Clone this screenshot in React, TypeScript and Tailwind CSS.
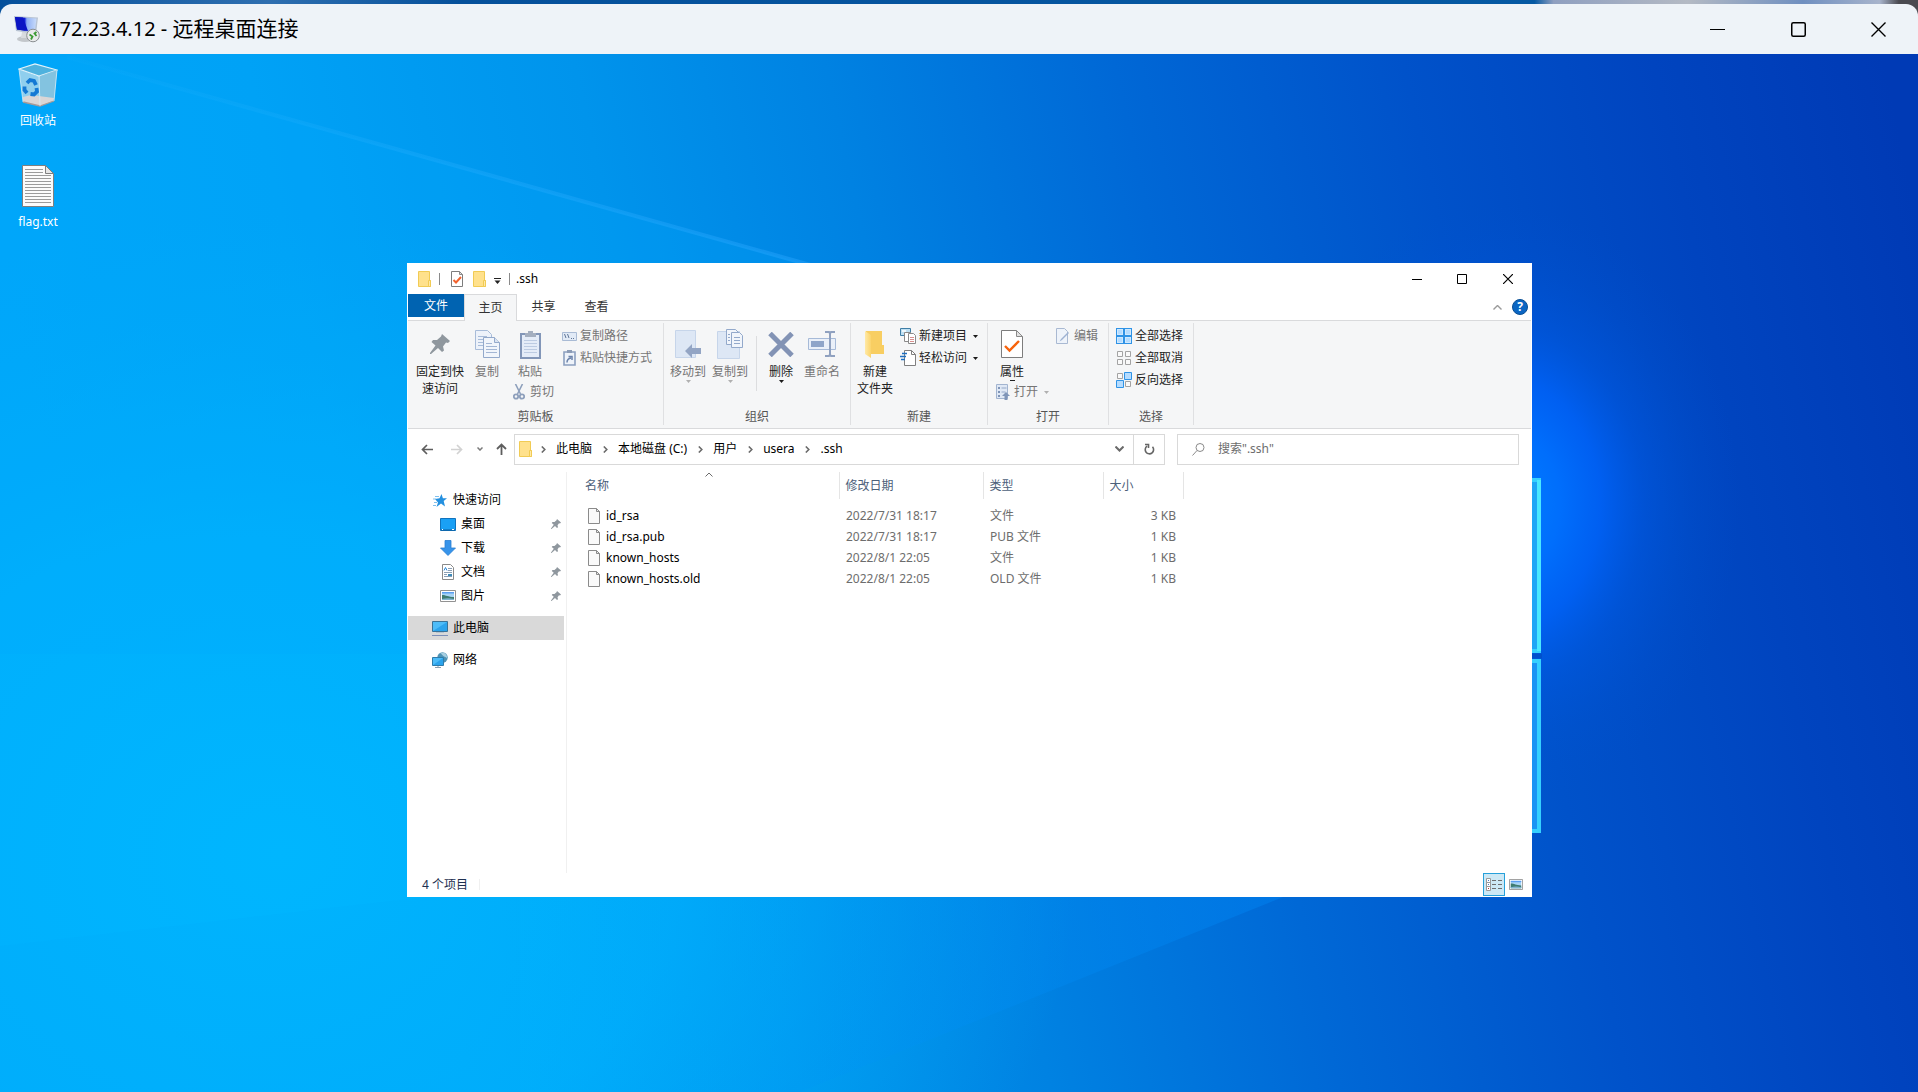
import { useState } from 'react';
import type { ReactNode } from 'react';

interface FileEntry {
  name: string;
  modified: string;
  type: string;
  size: string;
}

const FILES: FileEntry[] = [
  { name: 'id_rsa', modified: '2022/7/31 18:17', type: '文件', size: '3 KB' },
  { name: 'id_rsa.pub', modified: '2022/7/31 18:17', type: 'PUB 文件', size: '1 KB' },
  { name: 'known_hosts', modified: '2022/8/1 22:05', type: '文件', size: '1 KB' },
  { name: 'known_hosts.old', modified: '2022/8/1 22:05', type: 'OLD 文件', size: '1 KB' },
];

const CRUMBS = ['此电脑', '本地磁盘 (C:)', '用户', 'usera', '.ssh'];

const TABS = ['主页', '共享', '查看'];

// ---------- Icons ----------

function RemoteDesktopIcon() {
  return (
    <svg className="h-[28px] w-[28px]" viewBox="0 0 28 28">
      <defs>
        <linearGradient id="rdScreen" x1="0" y1="0" x2="1" y2="0">
          <stop offset="0" stopColor="#0a12a8" />
          <stop offset="0.45" stopColor="#1420d8" />
          <stop offset="0.55" stopColor="#8fb0f4" />
          <stop offset="1" stopColor="#c9dcfb" />
        </linearGradient>
      </defs>
      <ellipse cx="12" cy="24" rx="8" ry="3" fill="#c3c7cb" />
      <path d="M9 17h7l1 6H8z" fill="#d8dbde" />
      <path d="M1 1l24 1.500-2 16.500-20-3z" fill="#b8c4d4" />
      <path d="M2 2l21.500 1.500-1.800 13.700L4 14.500z" fill="url(#rdScreen)" />
      <path d="M2 2l8 .6 5 13.500-11-1.600z" fill="#0b14c4" />
      <circle cx="20" cy="20.500" r="6.300" fill="#e9ebec" stroke="#8b8f92" />
      <path d="M16.500 19.500l3 2-1.500 3M23.500 17l-2 1.500 2 2.500" fill="none" stroke="#3c9a34" strokeWidth="1.800" />
    </svg>
  );
}

function RecycleBinIcon() {
  return (
    <svg className="h-[44px] w-[40px]" viewBox="0 0 40 44">
      <path d="M1 6l4 33 17 4 14-5 3-31-20 6z" fill="#9fd4ec" fillOpacity="0.9" />
      <path d="M1 6l16-5 22 6-18 6z" fill="#4fb2de" stroke="#e3f3fa" strokeWidth="1.200" />
      <path d="M22 13l17-6-3 31-14 5z" fill="#7fbfdc" fillOpacity="0.8" />
      <path d="M5 34l8-2 23 3-1 3-13 5-17-4z" fill="#d9d6d6" />
      <path d="M5 39l17 4 14-5" fill="none" stroke="#a89a98" strokeWidth="1.300" />
      <path d="M1 6l4 33M39 7l-3 31M21 13l1 30" stroke="#d5ecf6" strokeWidth="0.800" fill="none" />
      <path
        d="M9 20l3-3 4 1 2 4M6.500 23.500L6.500 27l2.500 3M18.500 25l.5 3.500-3 3-3.500-.5"
        fill="none"
        stroke="#1479d4"
        strokeWidth="3.800"
      />
    </svg>
  );
}

function TextFileIcon() {
  return (
    <svg className="h-[42px] w-[32px]" viewBox="0 0 32 42">
      <path d="M.5.500h23l8 8v33H.5z" fill="#fbfbfb" stroke="#7f7f7f" />
      <path d="M23.500.500v8h8z" fill="#e6e6e6" stroke="#7f7f7f" />
      <path
        d="M3 4.500h18M3 7.500h18M3 10.500h26M3 13.500h26M3 16.500h26M3 19.500h26M3 22.500h26M3 25.500h26M3 28.500h26M3 31.500h26M3 34.500h26M3 37.500h26"
        stroke="#9b9b9b"
      />
    </svg>
  );
}

function FolderIcon() {
  return (
    <svg className="h-[17px] w-[14px]" viewBox="0 0 14 17">
      <path d="M.5.500h11v9h1v6H.5z" fill="#ffe18c" stroke="#f1cb54" />
      <path d="M10.500 9.500h2v6h-2z" fill="#ffe9a8" stroke="#f1cb54" />
    </svg>
  );
}

function CheckPageIcon({ large = false }: { large?: boolean }) {
  return (
    <svg className={large ? 'h-[28px] w-[22px]' : 'h-[16px] w-[12px]'} viewBox={large ? '0 0 22 28' : '0 0 12 16'}>
      {large ? (
        <>
          <path d="M.5.500h15l6 6v21H.5z" fill="#fff" stroke="#7d7d7d" />
          <path d="M15.500.500v6h6z" fill="#e2e2e2" stroke="#8a8a8a" />
          <path d="M4 16l4.500 4.500L18 11" fill="none" stroke="#f7630c" strokeWidth="2.400" />
        </>
      ) : (
        <>
          <path d="M.5.500h8l3 3v12H.5z" fill="#fff" stroke="#7d7d7d" />
          <path d="M8.500.500v3h3z" fill="#e2e2e2" stroke="#8a8a8a" />
          <path d="M2.500 9l2.500 2.500L10 6" fill="none" stroke="#f2622e" strokeWidth="2" />
        </>
      )}
    </svg>
  );
}

function PinIcon({ small = false }: { small?: boolean }) {
  return (
    <svg className={small ? 'h-[10px] w-[10px]' : 'h-[20px] w-[20px]'} viewBox="0 0 20 20" fill="#8f979e">
      <path d="M12 0l8 7-2 2-2-.5-3 4 1 4-2 1.500-4-4L1 20H0v-1l5.500-7.500-4-3.500L3 6h4l4-3.500z" />
    </svg>
  );
}

function CopyIcon() {
  return (
    <svg className="h-[28px] w-[25px]" viewBox="0 0 25 28">
      <path d="M.5.500h12l4 4v15H.5z" fill="#edf2fa" stroke="#a8bcd9" />
      <path d="M3 6.500h9M3 9.500h9M3 12.500h6M3 15.500h6" stroke="#a8bcd9" />
      <path d="M8.500 7.500h11l5 5v15h-16z" fill="#f1f5fb" stroke="#93a9cb" />
      <path d="M19.500 7.500v5h5" fill="#dbe4f1" stroke="#93a9cb" />
      <path d="M11 13.500h6M11 16.500h11M11 19.500h11M11 22.500h11" stroke="#a3b6d4" />
    </svg>
  );
}

function PasteIcon() {
  return (
    <svg className="h-[29px] w-[21px]" viewBox="0 0 21 29">
      <path d="M1 4h19v24H1z" fill="#e4ecf8" stroke="#8296b8" strokeWidth="2" />
      <path d="M5 3h3V1h5v2h3v4H5z" fill="#a4afc0" />
      <path d="M4 10.500h13M4 13.500h13M4 16.500h13M4 19.500h13M4 22.500h13" stroke="#bccbe2" />
    </svg>
  );
}

function CutIcon() {
  return (
    <svg className="h-[16px] w-[12px]" viewBox="0 0 12 16" fill="none" stroke="#8ea0bc">
      <path d="M2.500 0l5 10M9.500 0l-5 10" strokeWidth="1.600" />
      <circle cx="3" cy="12.500" r="2.200" strokeWidth="1.800" />
      <circle cx="9" cy="12.500" r="2.200" strokeWidth="1.800" />
    </svg>
  );
}

function CopyPathIcon() {
  return (
    <svg className="h-[9px] w-[15px]" viewBox="0 0 15 9">
      <path d="M.5.500h14v8H.5z" fill="#e1eaf6" stroke="#a9bbd5" />
      <path d="M2.500 2l1.500 4M5.500 2L7 6M9 6.500h1M11 6.500h1" stroke="#5f7596" />
    </svg>
  );
}

function PasteShortcutIcon() {
  return (
    <svg className="h-[16px] w-[13px]" viewBox="0 0 13 16">
      <path d="M1 2h11v13H1z" fill="#eef3fa" stroke="#8ca0c0" strokeWidth="1.600" />
      <path d="M4 0h5v3H4z" fill="#8c9cb6" />
      <path d="M4 12.500c0-3 1-4 4-4.500M5.500 6.500H9V10" fill="none" stroke="#6b83ab" strokeWidth="1.500" />
    </svg>
  );
}

function MoveToIcon() {
  return (
    <svg className="h-[28px] w-[26px]" viewBox="0 0 26 28">
      <path d="M.5.500h20v27H.5z" fill="#dde7f5" stroke="#c6d5ea" />
      <path d="M17 14v4h9v6h-9v4l-7-7z" fill="#93a5c4" />
    </svg>
  );
}

function CopyToIcon() {
  return (
    <svg className="h-[30px] w-[26px]" viewBox="0 0 26 30">
      <path d="M.5 2.500h22v27H.5z" fill="#dde7f5" stroke="#c6d5ea" />
      <path d="M9.500.500h9l3 3v12h-12z" fill="#f1f5fb" stroke="#93a9cb" />
      <path d="M14.500 3.500h8l3 3v12h-11z" fill="#f1f5fb" stroke="#93a9cb" />
      <path d="M17 8.500h6M17 11.500h6M17 14.500h6M11 5.500h2M11 8.500h2M11 11.500h2" stroke="#93a9cb" />
    </svg>
  );
}

function DeleteIcon() {
  return (
    <svg className="h-[25px] w-[26px]" viewBox="0 0 26 25">
      <path d="M2 1.500l22 22M24 1.500l-22 22" stroke="#8293b5" strokeWidth="5" />
    </svg>
  );
}

function RenameIcon() {
  return (
    <svg className="h-[26px] w-[28px]" viewBox="0 0 28 26">
      <path d="M.5 7.500h27v11H.5z" fill="#eaf0f9" stroke="#a6bad8" />
      <path d="M3 10h13v6H3z" fill="#8fa5c9" />
      <path d="M17 1h4l1 1.500L23 1h4M17 25h4l1-1.500 1 1.500h4M22 2v22" stroke="#8fa1c0" strokeWidth="2" fill="none" />
    </svg>
  );
}

function NewFolderIcon() {
  return (
    <svg className="h-[27px] w-[20px]" viewBox="0 0 20 27">
      <defs>
        <linearGradient id="folderFront" x1="0" y1="0" x2="1" y2="0">
          <stop offset="0" stopColor="#ffe9a6" />
          <stop offset="1" stopColor="#fbd46c" />
        </linearGradient>
      </defs>
      <path d="M1 0h16v14h2v9H1z" fill="#f8ce62" />
      <path d="M0 0l6 4v23l-6-4z" fill="url(#folderFront)" />
    </svg>
  );
}

function NewItemIcon() {
  return (
    <svg className="h-[16px] w-[16px]" viewBox="0 0 16 16">
      <path d="M.5.500h10v7H.5z" fill="#bfe0f3" stroke="#3f7ea6" />
      <path d="M2 2h4v2H2z" fill="#eef8fd" />
      <path d="M4.500 4.500h6v9h-6z" fill="#fff" stroke="#8a8a8a" />
      <path d="M8.500 5.500h5l2 2v8h-7z" fill="#fff" stroke="#8a8a8a" />
      <path d="M10 9.500h4M10 11.500h4M10 13.500h4" stroke="#d88f8f" />
    </svg>
  );
}

function EasyAccessIcon() {
  return (
    <svg className="h-[16px] w-[16px]" viewBox="0 0 16 16">
      <path d="M4.500.500h7l4 4v11h-11z" fill="#fff" stroke="#7f7f7f" />
      <path d="M11.500.500v4h4" fill="none" stroke="#7f7f7f" />
      <path d="M2 3.500h5M0 6.500h6M1 9.500h4" stroke="#1f6fc0" strokeWidth="1.300" />
    </svg>
  );
}

function EditIcon() {
  return (
    <svg className="h-[16px] w-[14px]" viewBox="0 0 14 16">
      <path d="M.5.500h8l3 3v12H.5z" fill="#eef3fa" stroke="#a9b9d2" />
      <path d="M13 5l-7 7-2.500 1.500L5 11l7-7z" fill="#9db2d2" />
    </svg>
  );
}

function OpenIcon() {
  return (
    <svg className="h-[16px] w-[14px]" viewBox="0 0 14 16">
      <path d="M.5.500h11v14H.5z" fill="#dfe8f5" stroke="#a2b4d0" />
      <path d="M2 3h2v2H2zM2 7h2v2H2zM2 11h2v2H2z" fill="#7f95b8" />
      <path d="M5.500 4h5M5.500 8h4" stroke="#94a8c8" />
      <path d="M10 8l4 4h-2.500v4h-3v-4H6z" fill="#7f95b8" />
    </svg>
  );
}

function SelectAllIcon() {
  return (
    <svg className="h-[16px] w-[16px]" viewBox="0 0 16 16">
      <path d="M0 0h16v16H0z" fill="#2f93e6" />
      <path d="M1 1h6v6H1zM9 1h6v6H9zM1 9h6v6H1zM9 9h6v6H9z" fill="#cfe9ff" />
      <path d="M2 2h4v4H2zM10 2h4v4h-4zM2 10h4v4H2zM10 10h4v4h-4z" fill="#b5dcff" />
    </svg>
  );
}

function SelectNoneIcon() {
  return (
    <svg className="h-[16px] w-[16px]" viewBox="0 0 16 16">
      <path d="M1.500 1.500h5v5h-5zM9.500 1.500h5v5h-5zM1.500 9.500h5v5h-5zM9.500 9.500h5v5h-5z" fill="#fafafa" stroke="#a3a3a3" />
    </svg>
  );
}

function InvertIcon() {
  return (
    <svg className="h-[16px] w-[16px]" viewBox="0 0 16 16">
      <path d="M1.500 1.500h5v5h-5zM9.500 9.500h5v5h-5z" fill="#fafafa" stroke="#a3a3a3" />
      <path d="M8.500.500h7v7h-7zM.5 8.500h7v7h-7z" fill="#b5dcff" stroke="#2f93e6" />
    </svg>
  );
}

function Caret({ muted = false }: { muted?: boolean }) {
  return (
    <svg className="h-[3px] w-[5px]" viewBox="0 0 5 3">
      <path d="M0 0h5L2.500 3z" fill={muted ? '#b0b0b0' : '#1a1a1a'} />
    </svg>
  );
}

function CrumbChevron() {
  return (
    <svg className="h-[7px] w-[5px] shrink-0" viewBox="0 0 5 7" fill="none" stroke="#6b6b6b" strokeWidth="1.600">
      <path d="M.8.500l3 3-3 3" />
    </svg>
  );
}

function StarIcon() {
  return (
    <svg className="h-[13px] w-[14px]" viewBox="0 0 14 13">
      <path d="M8.500 0l1.400 4.200H14l-3.300 2.700L12 12.500 8 9.500l-4.500 3.500L5 8.500 2 5l4.500-.8z" fill="#2490df" />
      <path d="M2 2.500h4M0 5h3M1 8.500h3M0 11.500h3" stroke="#7fc0ee" />
    </svg>
  );
}

function DesktopIcon() {
  return (
    <svg className="h-[13px] w-[16px]" viewBox="0 0 16 13">
      <path d="M.5.500h15v12H.5z" fill="#1aa0f5" stroke="#1173bd" />
      <path d="M1 12h14" stroke="#0d5f9e" />
      <path d="M2 11.500h1M12 11.500h2" stroke="#fff" />
    </svg>
  );
}

function DownloadIcon() {
  return (
    <svg className="h-[16px] w-[16px]" viewBox="0 0 16 16">
      <path d="M5 .5h6V8h4.500L8 15.500.5 8H5z" fill="#3794ea" stroke="#2a7fd2" strokeWidth="0.800" />
    </svg>
  );
}

function DocumentIcon() {
  return (
    <svg className="h-[16px] w-[16px]" viewBox="0 0 16 16">
      <path d="M2.500.500h8l3 3v12h-11z" fill="#fff" stroke="#8a8a8a" />
      <path d="M8 4.500h4M8 6.500h4M4 8.500h8M4 10.500h3M4 12.500h8" stroke="#8a9fb5" />
      <path d="M4 6.500l1.500-3 1.500 3" stroke="#2b88d8" fill="none" />
      <path d="M8 10h4v2H8z" fill="#3d8ab8" />
    </svg>
  );
}

function PictureIcon({ small = false }: { small?: boolean }) {
  return (
    <svg className={small ? 'h-[11px] w-[14px]' : 'h-[12px] w-[16px]'} viewBox="0 0 16 12" preserveAspectRatio="none">
      <path d="M.5.500h15v11H.5z" fill="#fff" stroke="#929292" />
      <path d="M2 2h12v8H2z" fill="#a8d4f5" />
      <path d="M2 5c4 0 6 2 12 2v3H2z" fill="#3e7c72" />
      <path d="M2 9c4-1 8-1 12 0v1H2z" fill="#7fb3d0" />
      <path d="M2 2h12v1.500H2z" fill="#5a9ff2" />
    </svg>
  );
}

function ThisPcIcon() {
  return (
    <svg className="h-[16px] w-[16px]" viewBox="0 0 16 16">
      <path d="M.5 1.500h15v10H.5z" fill="#4dbcf8" stroke="#3a7296" />
      <path d="M1 11L15 2v9z" fill="#2ba3ec" />
      <path d="M4 12.500h8" stroke="#b5c3cf" />
      <path d="M0 15.500h16" stroke="#7c8fb8" />
    </svg>
  );
}

function NetworkIcon() {
  return (
    <svg className="h-[16px] w-[16px]" viewBox="0 0 16 16">
      <circle cx="10.500" cy="5.500" r="5.200" fill="#4f93b4" />
      <path d="M8 1.500c2 0 2 2 4 3s3 1 3 2c.5-3-1-5-3.500-6z" fill="#a7cfe2" />
      <path d="M.5 5.500h11v8H.5z" fill="#4dbcf8" stroke="#2e7cab" />
      <path d="M1 13l10-7v7z" fill="#2ba3ec" />
      <path d="M6 14v1M3 15.500h6" stroke="#8ba0b0" />
    </svg>
  );
}

function BlankFileIcon() {
  return (
    <svg className="h-[16px] w-[12px]" viewBox="0 0 12 16">
      <path d="M.5.500h8l3 3v12H.5z" fill="#fafafa" stroke="#8b8b8b" />
      <path d="M8.500.500v3h3z" fill="#e9e9e9" stroke="#8b8b8b" />
    </svg>
  );
}

// ---------- Desktop ----------

function Wallpaper() {
  return (
    <svg className="absolute inset-0 h-full w-full" viewBox="0 0 1918 1038" preserveAspectRatio="none">
      <defs>
        <linearGradient id="sky" gradientUnits="userSpaceOnUse" x1="0" y1="200" x2="1838" y2="-204">
          <stop offset="0" stopColor="#00a6f9" />
          <stop offset="0.15" stopColor="#00a2f6" />
          <stop offset="0.32" stopColor="#0094ec" />
          <stop offset="0.45" stopColor="#0082e2" />
          <stop offset="0.6" stopColor="#0068d6" />
          <stop offset="0.75" stopColor="#0052ca" />
          <stop offset="0.88" stopColor="#0044bf" />
          <stop offset="1" stopColor="#003ab5" />
        </linearGradient>
        <radialGradient
          id="cyan"
          gradientUnits="userSpaceOnUse"
          cx="0"
          cy="0"
          r="1"
          gradientTransform="translate(280 800) scale(800 640)"
        >
          <stop offset="0" stopColor="#00b8ff" stopOpacity="0.9" />
          <stop offset="0.5" stopColor="#00b4fe" stopOpacity="0.7" />
          <stop offset="1" stopColor="#00acf6" stopOpacity="0" />
        </radialGradient>
        <radialGradient
          id="glow"
          gradientUnits="userSpaceOnUse"
          cx="0"
          cy="0"
          r="1"
          gradientTransform="translate(1500 450) scale(240 300)"
        >
          <stop offset="0" stopColor="#0080ff" />
          <stop offset="0.25" stopColor="#0070ff" stopOpacity="0.95" />
          <stop offset="0.42" stopColor="#0064fc" stopOpacity="0.8" />
          <stop offset="0.6" stopColor="#005cea" stopOpacity="0.45" />
          <stop offset="0.8" stopColor="#0056da" stopOpacity="0.2" />
          <stop offset="1" stopColor="#0050d0" stopOpacity="0" />
        </radialGradient>
        <linearGradient id="beam" gradientUnits="userSpaceOnUse" x1="67" y1="0" x2="1000" y2="300">
          <stop offset="0" stopColor="#2bb8ff" stopOpacity="0.05" />
          <stop offset="0.4" stopColor="#2bb0ff" stopOpacity="0.3" />
          <stop offset="1" stopColor="#2ba0ff" stopOpacity="0.5" />
        </linearGradient>
        <linearGradient id="lowerRay" gradientUnits="userSpaceOnUse" x1="500" y1="0" x2="1310" y2="0">
          <stop offset="0" stopColor="#0098f8" stopOpacity="0" />
          <stop offset="1" stopColor="#0088f8" stopOpacity="0.4" />
        </linearGradient>
      </defs>
      <rect width="1918" height="1038" fill="url(#sky)" />
      <rect width="1918" height="1038" fill="url(#cyan)" />
      <path d="M67 3l1033 289v308H0V0z" fill="#00a8ff" fillOpacity="0.2" />
      <path d="M67 3l1033 289" stroke="url(#beam)" strokeWidth="4" />
      <path d="M500 820h840L800 1038H500z" fill="url(#lowerRay)" />
      <path d="M0 892l520-60v206H0z" fill="#00a8f4" fillOpacity="0.12" />
      <rect width="1918" height="1038" fill="url(#glow)" />
      <g stroke="#35d0ff" strokeWidth="4">
        <path d="M1300 426h239v171h-239z" fill="#1fa6f6" />
        <path d="M1300 607h239v170h-239z" fill="#1a94f4" />
      </g>
      <path d="M1520 602h22" stroke="#0050cc" strokeWidth="5" />
      <path d="M1539 426v171" stroke="#4ae8ff" strokeWidth="4" />
    </svg>
  );
}

function DesktopShortcut({ icon, label }: { icon: ReactNode; label: string }) {
  return (
    <button className="flex h-[101px] w-[76px] flex-col items-center pt-[7px]">
      <span className="flex h-[48px] items-center justify-center">{icon}</span>
      <span className="mt-1 text-xs leading-4 text-white">{label}</span>
    </button>
  );
}

// ---------- Ribbon ----------

interface RibbonProps {
  icon: ReactNode;
  label: ReactNode;
  muted?: boolean;
  caret?: boolean;
  className?: string;
}

function BigButton({ icon, label, muted = false, caret = false, className = '' }: RibbonProps) {
  return (
    <button
      className={`flex flex-col items-center text-xs leading-[17px] ${muted ? 'text-[#757575]' : 'text-[#222]'} ${className}`}
    >
      <span className="flex h-[38px] items-center">{icon}</span>
      <span className="whitespace-nowrap">{label}</span>
      {caret && <Caret muted={muted} />}
    </button>
  );
}

function SmallButton({ icon, label, muted = false, caret = false, className = '' }: RibbonProps) {
  return (
    <button
      className={`flex h-[22px] items-center gap-[3px] text-xs whitespace-nowrap ${muted ? 'text-[#757575]' : 'text-[#222]'} ${className}`}
    >
      <span className="flex w-4 justify-center">{icon}</span>
      {label}
      {caret && (
        <span className="ml-[3px]">
          <Caret muted={muted} />
        </span>
      )}
    </button>
  );
}

interface RibbonGroupProps {
  title: string;
  className: string;
  children: ReactNode;
}

function RibbonGroup({ title, className, children }: RibbonGroupProps) {
  return (
    <section className={`flex shrink-0 flex-col border-r border-[#dfe0e2] ${className}`}>
      <div className="flex h-[86px] pt-[2px]">{children}</div>
      <h3 className="text-center text-xs leading-4 text-[#555]">{title}</h3>
    </section>
  );
}

function Ribbon() {
  return (
    <div className="flex h-[108px] overflow-hidden border-b border-[#d9dadc] bg-[#f5f6f7] pt-[2px] pb-[3px]">
      <RibbonGroup title="剪贴板" className="w-[256px]">
        <BigButton icon={<PinIcon />} label={<>固定到快<br />速访问</>} className="ml-1 w-[56px]" />
        <BigButton icon={<CopyIcon />} label="复制" muted className="w-[38px]" />
        <div className="flex w-[55px] flex-col gap-px pl-[5px]">
          <BigButton icon={<PasteIcon />} label="粘贴" muted className="w-[38px]" />
          <SmallButton icon={<CutIcon />} label="剪切" muted />
        </div>
        <div className="flex flex-col">
          <SmallButton icon={<CopyPathIcon />} label="复制路径" muted />
          <SmallButton icon={<PasteShortcutIcon />} label="粘贴快捷方式" muted />
        </div>
      </RibbonGroup>

      <RibbonGroup title="组织" className="w-[187px]">
        <BigButton icon={<MoveToIcon />} label="移动到" muted caret className="ml-[3px] w-[42px]" />
        <BigButton icon={<CopyToIcon />} label="复制到" muted caret className="w-[42px]" />
        <span className="mx-[5px] mt-[11px] h-[55px] w-px bg-[#dcdddf]" />
        <BigButton icon={<DeleteIcon />} label="删除" caret className="w-[38px]" />
        <BigButton icon={<RenameIcon />} label="重命名" muted className="ml-px w-[42px]" />
      </RibbonGroup>

      <RibbonGroup title="新建" className="w-[137px]">
        <BigButton icon={<NewFolderIcon />} label={<>新建<br />文件夹</>} className="w-[48px]" />
        <div className="ml-px flex flex-col">
          <SmallButton icon={<NewItemIcon />} label="新建项目" caret />
          <SmallButton icon={<EasyAccessIcon />} label="轻松访问" caret />
        </div>
      </RibbonGroup>

      <RibbonGroup title="打开" className="w-[121px]">
        <div className="ml-[7px] flex w-[60px] flex-col">
          <BigButton icon={<CheckPageIcon large />} label="属性" className="ml-px w-[32px]" />
          <span className="ml-[15px] h-px w-[5px] bg-[#222]" />
          <SmallButton icon={<OpenIcon />} label="打开" muted caret />
        </div>
        <SmallButton icon={<EditIcon />} label="编辑" muted />
      </RibbonGroup>

      <RibbonGroup title="选择" className="w-[85px]">
        <div className="ml-[7px] flex flex-col">
          <SmallButton icon={<SelectAllIcon />} label="全部选择" />
          <SmallButton icon={<SelectNoneIcon />} label="全部取消" />
          <SmallButton icon={<InvertIcon />} label="反向选择" />
        </div>
      </RibbonGroup>
    </div>
  );
}

// ---------- Explorer ----------

function WindowControls() {
  return (
    <div className="ml-auto flex h-full">
      <button aria-label="最小化" className="flex w-[45px] items-center justify-center">
        <svg className="h-[10px] w-[10px]" viewBox="0 0 10 10" stroke="#000">
          <path d="M0 5.500h10" />
        </svg>
      </button>
      <button aria-label="最大化" className="flex w-[46px] items-center justify-center">
        <svg className="h-[10px] w-[10px]" viewBox="0 0 10 10" fill="none" stroke="#000">
          <path d="M.5.500h9v9h-9z" />
        </svg>
      </button>
      <button aria-label="关闭" className="flex w-[46px] items-center justify-center">
        <svg className="h-[10px] w-[10px]" viewBox="0 0 10 10" stroke="#000" strokeWidth="1.200">
          <path d="M0 0l10 10M10 0L0 10" />
        </svg>
      </button>
    </div>
  );
}

function AddressRow() {
  return (
    <div className="flex h-[43px] shrink-0 items-center pt-px pr-3 pb-1">
      <button aria-label="后退" className="flex w-[38px] justify-center">
        <svg className="h-[11px] w-[12px]" viewBox="0 0 12 11" fill="none" stroke="#5e5e5e" strokeWidth="1.700">
          <path d="M12 5.500H1.500M6 1L1.500 5.500 6 10" />
        </svg>
      </button>
      <button aria-label="前进" className="flex w-[22px] justify-center">
        <svg className="h-[11px] w-[12px]" viewBox="0 0 12 11" fill="none" stroke="#d2d2d2" strokeWidth="1.700">
          <path d="M0 5.500h10.500M6 1l4.500 4.500L6 10" />
        </svg>
      </button>
      <button aria-label="最近的位置" className="flex w-6 justify-center">
        <svg className="h-[4px] w-[6px]" viewBox="0 0 6 4" fill="none" stroke="#7a7a7a" strokeWidth="1.500">
          <path d="M.5.500L3 3 5.500.500" />
        </svg>
      </button>
      <button aria-label="上移" className="mr-1 flex w-[18px] justify-center">
        <svg className="h-[12px] w-[11px]" viewBox="0 0 11 12" fill="none" stroke="#5e5e5e" strokeWidth="1.800">
          <path d="M5.500 12V1.500M1 6l4.500-4.500L10 6" />
        </svg>
      </button>

      {/* Address bar */}
      <div className="flex h-[31px] flex-1 items-center border border-[#d9d9d9] pl-1 text-xs text-black">
        <span className="flex w-[18px]">
          <FolderIcon />
        </span>
        {CRUMBS.map(crumb => (
          <span key={crumb} className="flex items-center">
            <span className="flex w-3 justify-center">
              <CrumbChevron />
            </span>
            <button className="px-[7px] whitespace-nowrap">{crumb}</button>
          </span>
        ))}
        <button aria-label="以前的位置" className="ml-auto flex w-[28px] justify-center">
          <svg className="h-[6px] w-[9px]" viewBox="0 0 9 6" fill="none" stroke="#6a6a6a" strokeWidth="2">
            <path d="M.5.500l4 4 4-4" />
          </svg>
        </button>
        <button aria-label="刷新" className="flex h-full w-[31px] items-center justify-center border-l border-[#d9d9d9]">
          <svg className="h-[12px] w-[11px]" viewBox="0 0 11 12" fill="none" stroke="#666" strokeWidth="1.600">
            <path d="M3 3.200A4.200 4.200 0 1 0 8.500 3.800M1 1.500h3.500V5" />
          </svg>
        </button>
      </div>

      {/* Search box */}
      <label className="ml-3 flex h-[31px] w-[342px] items-center border border-[#d9d9d9] pl-[14px]">
        <svg className="h-[13px] w-[13px] shrink-0" viewBox="0 0 13 13" fill="none" stroke="#8a8a8a">
          <circle cx="8" cy="4.500" r="4" />
          <path d="M5 7.500L.5 12.500" />
        </svg>
        <input
          type="search"
          aria-label="搜索"
          placeholder={'搜索".ssh"'}
          className="ml-[13px] w-full min-w-0 bg-transparent text-xs outline-none placeholder:text-[#6d6d6d]"
        />
      </label>
    </div>
  );
}

interface SidebarItemProps {
  icon: ReactNode;
  label: string;
  nested?: boolean;
  selected?: boolean;
}

function SidebarItem({ icon, label, nested = false, selected = false }: SidebarItemProps) {
  return (
    <button
      className={`flex h-6 w-[156px] items-center gap-[5px] text-xs text-black ${nested ? 'pl-8' : 'pl-6'} ${selected ? 'bg-[#d9d9d9]' : ''}`}
    >
      <span className="flex w-4 justify-center">{icon}</span>
      {label}
      {nested && (
        <span className="mr-[3px] ml-auto">
          <PinIcon small />
        </span>
      )}
    </button>
  );
}

function Sidebar() {
  return (
    <nav className="flex w-[159px] shrink-0 flex-col border-r border-[#f0f0f0] pt-4">
      <SidebarItem icon={<StarIcon />} label="快速访问" />
      <SidebarItem icon={<DesktopIcon />} label="桌面" nested />
      <SidebarItem icon={<DownloadIcon />} label="下载" nested />
      <SidebarItem icon={<DocumentIcon />} label="文档" nested />
      <SidebarItem icon={<PictureIcon />} label="图片" nested />
      <div className="my-2">
        <SidebarItem icon={<ThisPcIcon />} label="此电脑" selected />
      </div>
      <SidebarItem icon={<NetworkIcon />} label="网络" />
    </nav>
  );
}

function FileTable() {
  return (
    <div className="min-w-0 flex-1">
      <table className="w-[616px] table-fixed border-collapse text-xs">
        <colgroup>
          <col className="w-[272px]" />
          <col className="w-[144px]" />
          <col className="w-[120px]" />
          <col className="w-[80px]" />
        </colgroup>
        <thead>
          <tr className="h-[27px] text-left text-[#4c607a]">
            <th className="relative border-r border-[#e5e5e5] py-0 pl-[18px] font-normal">
              名称
              <svg className="absolute top-0 left-[138px] h-[5px] w-[8px]" viewBox="0 0 8 5" fill="none" stroke="#6b6b6b">
                <path d="M.5 4.500L4 1l3.500 3.500" />
              </svg>
            </th>
            <th className="border-r border-[#e5e5e5] py-0 pl-[6px] font-normal">修改日期</th>
            <th className="border-r border-[#e5e5e5] py-0 pl-[6px] font-normal">类型</th>
            <th className="border-r border-[#e5e5e5] py-0 pl-[6px] font-normal">大小</th>
          </tr>
        </thead>
        <tbody className="text-[#6d6d6d]">
          <tr className="h-[6px]" aria-hidden="true" />
          {FILES.map(file => (
            <tr key={file.name} className="h-[21px]">
              <td className="py-0 pl-[21px] text-black">
                <span className="flex items-center gap-[6px]">
                  <BlankFileIcon />
                  {file.name}
                </span>
              </td>
              <td className="py-0 pl-[7px]">{file.modified}</td>
              <td className="py-0 pl-[7px]">{file.type}</td>
              <td className="py-0 pr-[7px] text-right">{file.size}</td>
            </tr>
          ))}
        </tbody>
      </table>
    </div>
  );
}

function StatusBar() {
  return (
    <footer className="flex h-[23px] shrink-0 items-center pr-2 pl-[14px] text-xs text-[#1e3050]">
      <span>{FILES.length} 个项目</span>
      <span className="ml-[11px] h-[11px] w-px bg-[#f0f0f0]" />
      <button
        aria-label="详细信息"
        className="ml-auto flex h-[23px] w-[22px] items-center justify-center border border-[#26a0da] bg-[#cce8f5]"
      >
        <svg className="h-[13px] w-[16px]" viewBox="0 0 16 13">
          <path d="M.5.500h4v4h-4zM.5 4.500h4v4h-4zM.5 8.500h4v4h-4z" fill="#fff" stroke="#999" />
          <path d="M2 2h1v1H2zM2 6h1v1H2z" fill="#4a79c0" />
          <path d="M2 10h1v1H2z" fill="#c03030" />
          <path d="M6 2.500h4M12 2.500h4M6 6.500h4M12 6.500h4M6 10.500h4M12 10.500h4" stroke="#6e6e6e" />
        </svg>
      </button>
      <button aria-label="大缩略图" className="ml-1">
        <PictureIcon small />
      </button>
    </footer>
  );
}

function ExplorerWindow() {
  const [activeTab, setActiveTab] = useState('主页');

  return (
    <div className="absolute top-[209px] right-[386px] bottom-[195px] left-[407px] flex flex-col overflow-hidden border border-white bg-white">
      {/* Title bar */}
      <header className="flex h-[30px] shrink-0 items-center pl-[10px]">
        <FolderIcon />
        <span className="mr-[11px] ml-[7px] h-3 w-px bg-[#8a8a8a]" />
        <button aria-label="属性">
          <CheckPageIcon />
        </button>
        <button aria-label="新建文件夹" className="ml-[10px]">
          <FolderIcon />
        </button>
        <button aria-label="自定义快速访问工具栏" className="ml-[7px]">
          <svg className="mt-1 h-[6px] w-[7px]" viewBox="0 0 7 6">
            <path d="M0 .5h7" stroke="#222" />
            <path d="M.5 2.500h6L3.500 6z" fill="#222" />
          </svg>
        </button>
        <span className="mr-[6px] ml-[8px] h-3 w-px bg-[#8a8a8a]" />
        <h2 className="text-xs text-black">.ssh</h2>
        <WindowControls />
      </header>

      {/* Ribbon tabs */}
      <div className="flex h-[27px] shrink-0 items-start border-b border-[#d9dadc] text-xs text-[#333]">
        <button className="h-[23px] w-[56px] bg-[#0063b1] text-white">文件</button>
        {TABS.map(tab => (
          <button
            key={tab}
            onClick={() => setActiveTab(tab)}
            className={`h-[27px] w-[53px] pb-px ${
              activeTab === tab ? 'border-x border-t border-[#d9dadc] bg-[#f5f6f7]' : ''
            }`}
          >
            {tab}
          </button>
        ))}
        <button aria-label="最小化功能区" className="mt-[11px] mr-[10px] ml-auto">
          <svg className="h-[5px] w-[9px]" viewBox="0 0 9 5" fill="none" stroke="#9a9a9a" strokeWidth="1.400">
            <path d="M.5 4.500l4-4 4 4" />
          </svg>
        </button>
        <button
          aria-label="帮助"
          className="mt-[5px] mr-[3px] h-4 w-4 rounded-full border border-[#0a4f94] bg-[#0b66c3] text-xs leading-[14px] font-bold text-white"
        >
          ?
        </button>
      </div>

      <Ribbon />
      <AddressRow />

      <div className="flex min-h-0 flex-1">
        <Sidebar />
        <FileTable />
      </div>
      <StatusBar />
    </div>
  );
}

export default function App() {
  return (
    <div className="flex min-h-screen flex-col bg-[linear-gradient(90deg,#05509b_0%,#2f6fb0_14%,#05509b_24%,#0559a3_80%,#8f9fc0_81%,#b4bac4_88%,#6f8fc0_94%,#a8b4cc_98%,#4a4a50_99%)] pt-1 font-['Noto_Sans','Noto_Sans_CJK_SC',sans-serif]">
      {/* Remote session title bar */}
      <header className="flex h-[50px] shrink-0 items-center rounded-t-xl bg-[#eef3f8] pl-[13px]">
        <RemoteDesktopIcon />
        <h1 className="ml-[7px] text-xl text-black">
          172.23.4.12 - <span className="text-[21px]">远程桌面连接</span>
        </h1>
        <div className="ml-auto flex h-full">
          <button aria-label="最小化" className="flex w-[81px] items-center justify-center">
            <svg className="h-[15px] w-[15px]" viewBox="0 0 15 15" stroke="#000">
              <path d="M0 7.500h15" />
            </svg>
          </button>
          <button aria-label="最大化" className="flex w-[81px] items-center justify-center">
            <svg className="h-[15px] w-[15px]" viewBox="0 0 15 15" fill="none" stroke="#000" strokeWidth="1.500">
              <rect x="0.750" y="0.750" width="13.500" height="13.500" rx="1.500" />
            </svg>
          </button>
          <button aria-label="关闭" className="flex w-[79px] items-center justify-center">
            <svg className="h-[15px] w-[15px]" viewBox="0 0 15 15" stroke="#000" strokeWidth="1.400">
              <path d="M.5.500l14 14M14.500.500l-14 14" />
            </svg>
          </button>
        </div>
      </header>

      <main className="relative flex-1 overflow-hidden">
        <Wallpaper />
        <div className="relative flex w-[76px] flex-col">
          <DesktopShortcut icon={<RecycleBinIcon />} label="回收站" />
          <DesktopShortcut icon={<TextFileIcon />} label="flag.txt" />
        </div>
        <ExplorerWindow />
      </main>
    </div>
  );
}
